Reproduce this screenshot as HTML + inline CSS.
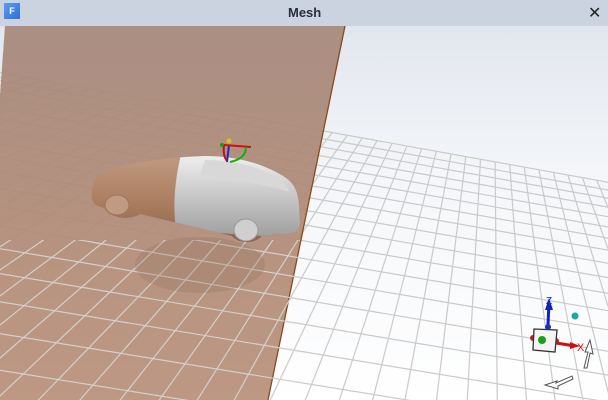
<!DOCTYPE html>
<html><head><meta charset="utf-8"><style>
html,body{margin:0;padding:0;width:608px;height:400px;overflow:hidden;font-family:"Liberation Sans",sans-serif;position:relative}
#bar{position:absolute;left:0;top:0;width:608px;height:26px;background:#cbd3e1}
#icon{position:absolute;left:4px;top:3px;width:16px;height:16px;background:linear-gradient(135deg,#5d9bf5,#2f6fd8);color:#fff;font:bold 9px "Liberation Sans",sans-serif;line-height:16px;text-align:center}
#title{position:absolute;left:288px;top:5px;font:bold 13px "Liberation Sans",sans-serif;color:#2a2e38}
#close{position:absolute;left:588px;top:3px;font:bold 16px "DejaVu Sans",sans-serif;color:#222}
#wrap{position:absolute;left:0;top:26px;width:608px;height:374px;overflow:hidden;background:linear-gradient(#e2e6ee,#f4f6f9 40%,#fff)}
#vp{display:block}
</style></head><body>
<div id="bar"><div id="icon">F</div><div id="title">Mesh</div><div id="close">✕</div></div>
<div id="wrap">
<svg id="vp" width="608" height="374" viewBox="0 26 608 374" xmlns="http://www.w3.org/2000/svg">
<defs>
<linearGradient id="br" x1="0" y1="0" x2="0" y2="1"><stop offset="0" stop-color="#a5887a"/><stop offset="0.5" stop-color="#b08a76"/><stop offset="1" stop-color="#b8917b"/></linearGradient>
<linearGradient id="sil" x1="0" y1="0" x2="0" y2="1"><stop offset="0" stop-color="#eeeeee"/><stop offset="0.5" stop-color="#c4c4c4"/><stop offset="1" stop-color="#9a9a9a"/></linearGradient>
<linearGradient id="bc" x1="0" y1="0" x2="0" y2="1"><stop offset="0" stop-color="#c09a80"/><stop offset="0.6" stop-color="#a87a5c"/><stop offset="1" stop-color="#8a6450"/></linearGradient>
<clipPath id="front"><polygon points="0,240 300,240 300,400 0,400"/></clipPath>
<clipPath id="silc"><path d="M182,150 C176,175 172,200 176,230 L320,240 L320,150Z"/></clipPath>
</defs>
<g id="g1" stroke="#cacaca" stroke-width="1.2" fill="none"></g>
<polygon points="5,26 345,26 268,400 0,400 0,95" fill="url(#br)" opacity="0.93"/>
<line x1="345" y1="26" x2="268" y2="400" stroke="#8a4a1c" stroke-width="1.3"/>
<g id="g2" stroke="#d4d0cc" stroke-width="1.2" fill="none" clip-path="url(#front)"></g>
<ellipse cx="200" cy="265" rx="65" ry="28" fill="#8a6a58" opacity="0.25"/>
<g>
<path d="M92,192 C92,178 102,170 120,166 C150,160 175,157 205,156 C235,156 262,163 283,176 C293,182 298,190 299,205 L300,222 C300,232 292,235 280,234 L262,236 C255,244 238,244 232,236 L140,214 C132,220 112,220 104,208 C94,206 90,200 92,192Z" fill="url(#bc)"/>
<path d="M92,192 C92,178 102,170 120,166 C150,160 175,157 205,156 C235,156 262,163 283,176 C293,182 298,190 299,205 L300,222 C300,232 292,235 280,234 L262,236 C255,244 238,244 232,236 L140,214 C132,220 112,220 104,208 C94,206 90,200 92,192Z" fill="url(#sil)" clip-path="url(#silc)"/>
<path d="M205,160 C235,160 262,168 282,180 L290,192 C265,185 230,178 200,175Z" fill="#d8d8d8" clip-path="url(#silc)"/>
<ellipse cx="246" cy="230" rx="12" ry="11" fill="#cfcfcf" stroke="#999" stroke-width="1"/>
<ellipse cx="117" cy="205" rx="12" ry="10" fill="#c19a82" stroke="#9b7660" stroke-width="1"/>
</g>
<g stroke-width="2" fill="none">
<line x1="229" y1="145" x2="227" y2="162" stroke="#1a2ad0"/>
<line x1="224" y1="145" x2="251" y2="147" stroke="#d01010"/>
<path d="M224,145 C223,152 224,157 227,161" stroke="#c01010"/>
<path d="M246,147 C246,155 240,160 230,162" stroke="#10b010"/>
<circle cx="229" cy="141" r="2.5" fill="#e0c020" stroke="none"/>
<circle cx="222" cy="145" r="2" fill="#10a010" stroke="none"/>
</g>
<g>
<line x1="548" y1="325" x2="549" y2="302" stroke="#1020c8" stroke-width="3"/>
<polygon points="545,310 549,298 553,310" fill="#1020c8"/>
<text x="546" y="304" font-size="10" fill="#1020d8" font-family="Liberation Sans,sans-serif">Z</text>
<line x1="556" y1="343" x2="575" y2="346" stroke="#d01010" stroke-width="3"/>
<polygon points="570,342 580,346 570,349" fill="#d01010"/>
<text x="577" y="351" font-size="11" fill="#e01010" font-family="Liberation Sans,sans-serif">X</text>
<circle cx="533" cy="338" r="3" fill="#c02020"/>
<circle cx="556" cy="341" r="3" fill="#c02020"/>
<circle cx="548" cy="327" r="3" fill="#2030c0"/>
<polygon points="534,329 557,330 555,352 533,350" fill="#f4f4f4" stroke="#333" stroke-width="1.3"/>
<circle cx="542" cy="340" r="4" fill="#18a018"/>
<circle cx="575" cy="316" r="3.5" fill="#1aa8a8"/>
<path d="M584,368 L588,352 L585,352 L590,340 L593,354 L590,353 L587,368Z" fill="#fff" stroke="#555" stroke-width="1"/>
<path d="M545,385 L557,381 L556,383 L572,376 L573,379 L558,386 L558,389Z" fill="#fff" stroke="#555" stroke-width="1"/>
</g>
</svg>
</div>
<script>
(function(){
function solve(A,b){var n=b.length;for(var i=0;i<n;i++){var p=i;for(var r=i+1;r<n;r++)if(Math.abs(A[r][i])>Math.abs(A[p][i]))p=r;var t=A[i];A[i]=A[p];A[p]=t;t=b[i];b[i]=b[p];b[p]=t;for(var r=i+1;r<n;r++){var f=A[r][i]/A[i][i];for(var c=i;c<n;c++)A[r][c]-=f*A[i][c];b[r]-=f*b[i];}}var x=new Array(n);for(var i=n-1;i>=0;i--){var s=b[i];for(var c=i+1;c<n;c++)s-=A[i][c]*x[c];x[i]=s/A[i][i];}return x;}
var U=44,W=22;
var src=[[0,0],[U,0],[U,W],[0,W]],dst=[[-20,69],[640,188],[1000,820],[-1500,470]];
var A=[],b=[];
for(var i=0;i<4;i++){var u=src[i][0],v=src[i][1],x=dst[i][0],y=dst[i][1];
A.push([u,v,1,0,0,0,-u*x,-v*x]);b.push(x);A.push([0,0,0,u,v,1,-u*y,-v*y]);b.push(y);}
var h=solve(A,b);
function P(u,v){var d=h[6]*u+h[7]*v+1;return [(h[0]*u+h[1]*v+h[2])/d,(h[3]*u+h[4]*v+h[5])/d];}
var s="";
for(var k=0;k<=W;k++){var a=P(0,k),c=P(U,k);s+='<line x1="'+a[0]+'" y1="'+a[1]+'" x2="'+c[0]+'" y2="'+c[1]+'"/>';}
for(var k=0;k<=U;k++){var a=P(k,0),c=P(k,W);s+='<line x1="'+a[0]+'" y1="'+a[1]+'" x2="'+c[0]+'" y2="'+c[1]+'"/>';}
document.getElementById("g1").innerHTML=s;document.getElementById("g2").innerHTML=s;
})();
</script>
</body></html>
